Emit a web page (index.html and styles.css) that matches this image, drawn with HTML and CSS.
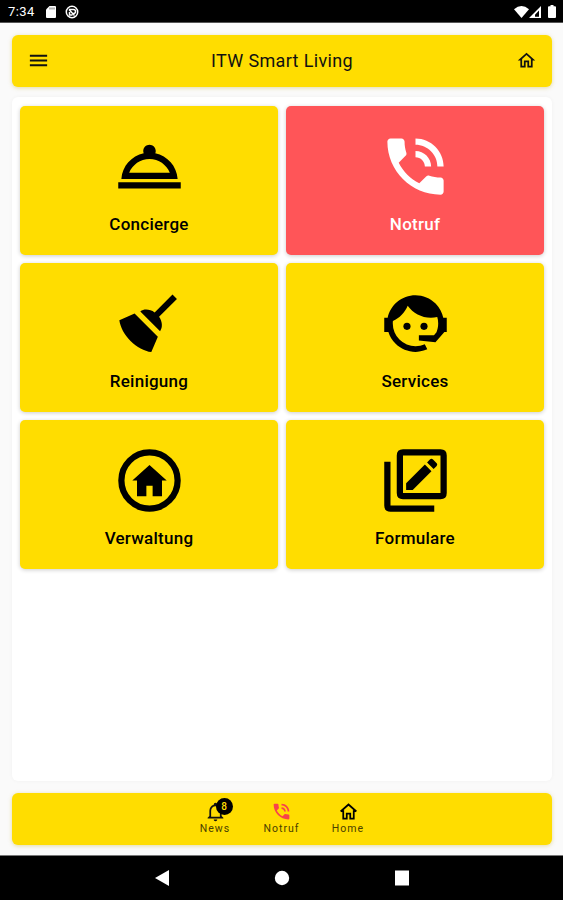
FILE: index.html
```html
<!DOCTYPE html>
<html lang="de">
<head>
<meta charset="UTF-8">
<meta name="viewport" content="width=device-width, initial-scale=1.0">
<title>ITW Smart Living</title>
<link rel="stylesheet" href="styles.css">
</head>
<body>

<svg class="symbols" aria-hidden="true">
  <symbol id="phone" viewBox="0 0 24 24">
    <path d="M20 15.5c-1.25 0-2.45-.2-3.57-.57-.35-.11-.74-.03-1.02.24l-2.2 2.2c-2.83-1.44-5.15-3.75-6.59-6.59l2.2-2.21c.28-.26.36-.65.25-1C8.7 6.45 8.5 5.25 8.5 4c0-.55-.45-1-1-1H4c-.55 0-1 .45-1 1 0 9.39 7.61 17 17 17 .55 0 1-.45 1-1v-3.5c0-.55-.45-1-1-1zM19 12h2c0-4.97-4.03-9-9-9v2c3.87 0 7 3.13 7 7zm-4 0h2c0-2.76-2.24-5-5-5v2c1.66 0 3 1.34 3 3z"/>
  </symbol>
  <symbol id="home" viewBox="0 0 24 24">
    <path d="M12 5.690l5 4.500V18h-2v-6H9v6H7v-7.810l5-4.500M12 3L2 12h3v8h6v-6h2v6h6v-8h3L12 3z"/>
  </symbol>
</svg>

<div class="status-bar">
  <span class="time">7:34</span>
  <svg class="sd" width="10" height="12" viewBox="0 0 10 12"><path d="M3.500 0H9q1 0 1 1v10q0 1-1 1H1q-1 0-1-1V3.500z"/><path class="slots" d="M4 1.500v2M6 1.500v2M8 1.500v2"/></svg>
  <svg class="sync" width="14" height="14" viewBox="0 0 14 14"><circle cx="7" cy="7" r="5.700"/><path d="M4 4.500h4.500a2 2 0 0 1 0 4H7M4 4.500l5.500 6M4.500 7v3h3"/></svg>
  <div class="status-right">
    <svg width="15" height="12" viewBox="0 0 15 12"><path d="M0 3.200Q7.500-3 15 3.200L7.500 12z"/></svg>
    <svg width="12" height="12" viewBox="0 0 12 12"><path fill-rule="evenodd" d="M12 0v12H0zM10 4.500L6 8.800v2h4z"/></svg>
    <svg class="battery" width="8" height="13" viewBox="0 0 8 13"><path d="M2.500 0h3v1.300H7q1 0 1 1V12q0 1-1 1H1q-1 0-1-1V2.300q0-1 1-1h1.500z"/></svg>
  </div>
</div>

<div class="app">
  <header class="bar header">
    <svg width="23" height="23" viewBox="0 0 24 24"><path d="M3 6h18v2H3zM3 11h18v2H3zM3 16h18v2H3z"/></svg>
    <h1>ITW Smart Living</h1>
    <svg width="21" height="21"><use href="#home"/></svg>
  </header>

  <main class="content">
    <a class="tile">
      <svg viewBox="0 0 24 24"><path d="M2 17h20v2H2zm11.840-9.210c.1-.24.16-.51.16-.79 0-1.100-.9-2-2-2s-2 .9-2 2c0 .28.060.55.160.79C6.250 8.600 3.270 11.930 3 16h18c-.27-4.070-3.250-7.400-7.160-8.210zM12 9.580c2.950 0 5.470 1.830 6.500 4.410h-13c1.030-2.580 3.550-4.410 6.500-4.410z"/></svg>
      <span>Concierge</span>
    </a>
    <a class="tile emergency">
      <svg viewBox="0 0 24 24"><use href="#phone"/></svg>
      <span>Notruf</span>
    </a>
    <a class="tile">
      <svg viewBox="0 0 24 24"><path d="M19.360 2.720l1.420 1.420-5.720 5.710c1.070 1.540 1.220 3.390.32 4.590L9.060 8.120c1.200-.9 3.050-.75 4.590.32l5.710-5.720M5.930 17.570c-2.010-2.010-3.240-4.410-3.580-6.650l4.880-2.090 7.440 7.440-2.090 4.880c-2.240-.34-4.640-1.570-6.650-3.580z"/></svg>
      <span>Reinigung</span>
    </a>
    <a class="tile">
      <svg viewBox="0 0 24 24"><path d="M18.720 14.760C19.070 13.910 19.260 13 19.260 12C19.260 11.280 19.150 10.590 18.960 9.950C18.310 10.100 17.630 10.180 16.920 10.180C13.860 10.180 11.150 8.670 9.500 6.340C8.610 8.500 6.910 10.260 4.770 11.220C4.730 11.470 4.730 11.740 4.730 12A7.270 7.270 0 0 0 12 19.270C13.050 19.270 14.060 19.040 14.970 18.630L15.780 20.260C14.140 20.810 12.870 21.080 12 21.080C9.580 21.080 7.270 20.130 5.570 18.420C4.530 17.380 3.760 16.110 3.330 14.730H2V10.180H3.090C3.930 6.040 7.600 2.920 12 2.920C14.400 2.920 16.710 3.870 18.420 5.580C19.690 6.840 20.540 8.450 20.890 10.180H22V14.730H21.240L18.380 18L13.080 17.400V15.730H17.910z"/><circle cx="9.270" cy="12.910" r="1.140"/><circle cx="14.720" cy="12.910" r="1.140"/></svg>
      <span>Services</span>
    </a>
    <a class="tile">
      <svg viewBox="0 0 24 24"><circle class="ring" cx="12" cy="12" r="9"/><path d="M12 7l5.500 5H16v5h-3v-3.300h-2V17H8v-5H6.500z"/></svg>
      <span>Verwaltung</span>
    </a>
    <a class="tile">
      <svg viewBox="0 0 24 24"><path fill-rule="evenodd" d="M8 2h12q2 0 2 2v12q0 2-2 2H8q-2 0-2-2V4q0-2 2-2zM8 4v12h12V4z"/><path d="M2 6h2v14h14v2H4q-2 0-2-2zM9 12.900l6-6 2.100 2.100-6 6H9zM15.700 6.200l.9-.9q.5-.5 1 0l1.100 1.100q.5.5 0 1l-.9.900z"/></svg>
      <span>Formulare</span>
    </a>
  </main>

  <footer class="bar footer">
    <a class="tab">
      <span class="bell">
        <svg width="21" height="21" viewBox="0 0 24 24"><path d="M10 21h4c0 1.100-.9 2-2 2s-2-.9-2-2m11-2v1H3v-1l2-2v-6c0-3.100 2.030-5.830 5-6.710V4a2 2 0 1 1 4 0v.29c2.970.88 5 3.610 5 6.710v6l2 2m-4-8a5 5 0 0 0-10 0v7h10v-7z"/></svg>
        <span class="badge">8</span>
      </span>
      <span>News</span>
    </a>
    <a class="tab">
      <svg class="red" width="21" height="21"><use href="#phone"/></svg>
      <span>Notruf</span>
    </a>
    <a class="tab">
      <svg class="tab-home" width="21" height="21" viewBox="0 0 24 24"><path d="M3 12l9-8 9 8M6 10.500V20h4v-5.500h4V20h4v-9.500"/></svg>
      <span>Home</span>
    </a>
  </footer>
</div>

<nav class="system-nav">
  <svg width="16" height="16" viewBox="0 0 16 16"><path d="M1 8L15 0v16z"/></svg>
  <svg width="16" height="16" viewBox="0 0 16 16"><circle cx="8" cy="8" r="7.200"/></svg>
  <svg width="16" height="16" viewBox="0 0 16 16"><path d="M1 .5h14v15H1z"/></svg>
</nav>

</body>
</html>
```
FILE: styles.css
```css
* {
  box-sizing: border-box;
}
body {
  margin: 0;
  height: 900px;
  display: flex;
  flex-direction: column;
  background-color: #fafafa;
  color: #111;
  font-family: Roboto, sans-serif;
}
svg {
  display: block;
  fill: currentColor;
}
.symbols {
  display: none;
}
.status-bar {
  height: 23px;
  padding: 1px 7px 0 8px;
  display: flex;
  align-items: center;
  background-color: #000;
  border-bottom: 1px solid #555;
  color: #fff;
  font-size: 13px;
  letter-spacing: 0.4px;
}
.time {
  width: 38px;
}
.sd {
  margin-right: 9px;
}
.slots {
  stroke: #000;
  stroke-width: 0.6;
}
.sync {
  fill: none;
  stroke: #fff;
  stroke-width: 1.5;
}
.status-right {
  margin-left: auto;
  display: flex;
  align-items: center;
}
.battery {
  margin-left: 7px;
}
.app {
  flex: 1;
  padding: 12px 11px 10px 12px;
  display: flex;
  flex-direction: column;
}
.bar {
  height: 52px;
  display: flex;
  align-items: center;
  background-color: #fd0;
  border-radius: 6px;
  box-shadow: 0 1px 4px rgba(190, 160, 0, 0.35);
}
.header {
  padding: 0 15px 2px 15px;
  justify-content: space-between;
}
.header h1 {
  margin: 0 2px 0 0;
  font-size: 18px;
  font-weight: 400;
  letter-spacing: 0.35px;
}
.content {
  flex: 1;
  margin: 10px 0 12px;
  padding: 9px 8px;
  display: grid;
  grid-template-columns: 1fr 1fr;
  grid-auto-rows: 149px;
  gap: 8px;
  background-color: #fff;
  border-radius: 6px;
  box-shadow: 0 0 4px rgba(0, 0, 0, 0.04);
}
.tile {
  padding-top: 23px;
  display: flex;
  flex-direction: column;
  align-items: center;
  background-color: #fd0;
  border-radius: 5px;
  box-shadow: 0 1px 4px rgba(0, 0, 0, 0.2);
  color: #000;
  font-size: 17px;
  font-weight: 500;
  line-height: 20px;
  letter-spacing: 0.25px;
}
.tile svg {
  width: 75px;
  height: 75px;
  margin-bottom: 10px;
}
.emergency {
  background-color: #ff5558;
  color: #fff;
}
.ring {
  fill: none;
  stroke: #000;
  stroke-width: 2;
}
.footer {
  justify-content: center;
  padding: 0 1px 1px 0;
}
.tab {
  width: 66.5px;
  display: flex;
  flex-direction: column;
  align-items: center;
  font-size: 10.5px;
  line-height: 14px;
  letter-spacing: 1px;
}
.tab > span:last-child {
  color: #4a4000;
}
.red {
  color: #f8434a;
}
.tab-home {
  fill: none;
  stroke: #000;
  stroke-width: 2;
}
.bell {
  position: relative;
}
.badge {
  position: absolute;
  top: -3px;
  left: 11px;
  width: 17px;
  height: 17px;
  border-radius: 50%;
  background-color: #000;
  color: #fd0;
  font-size: 10px;
  font-weight: 500;
  line-height: 17px;
  letter-spacing: 0;
  text-align: center;
}
.system-nav {
  height: 45px;
  display: flex;
  align-items: center;
  justify-content: center;
  gap: 104px;
  background-color: #000;
  border-top: 1px solid #777;
  color: #fff;
}
```
